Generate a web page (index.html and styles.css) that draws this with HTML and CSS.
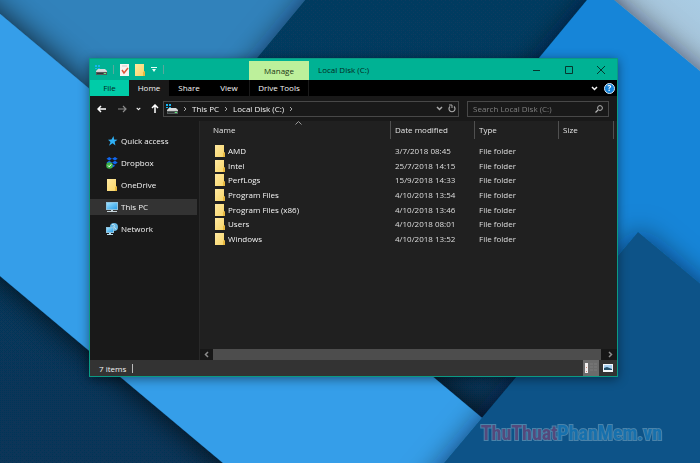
FILE: index.html
```html
<!DOCTYPE html>
<html lang="en">
<head>
<meta charset="utf-8">
<title>Local Disk (C:)</title>
<link rel="stylesheet" href="styles.css">
</head>
<body>
<svg class="defs" aria-hidden="true">
  <defs>
    <linearGradient id="fold" x1="0" y1="0" x2="1" y2="1"><stop offset="0" stop-color="#ffe9a2"/><stop offset="1" stop-color="#f8d568"/></linearGradient>
    <linearGradient id="screen" x1="0" y1="0" x2="1" y2="1"><stop offset="0" stop-color="#9be0ff"/><stop offset="1" stop-color="#2c9fe8"/></linearGradient>
  </defs>
  <symbol id="folder" viewBox="0 0 10 12"><path d="M0 0h9v12H0z" fill="url(#fold)"/><path d="M8 8l2-1v5H8z" fill="#e9b93f"/></symbol>
  <symbol id="drive" viewBox="0 0 12 10"><path d="M0 0h2v2H0zM3 0h2v2H3zM0 3h2v1H0zM3 3h2v1H3z" fill="#16b5f2"/><path d="M3 4h7l2 2H1z" fill="#d9dcdc"/><path d="M1 6h11v4H1z" fill="#555b5b"/><path d="M1 6h11v1H1z" fill="#d2d2d2"/><path d="M2 8h6v1H2z" fill="#303636"/><path d="M9 8h2v1H9z" fill="#5df07a"/></symbol>
  <symbol id="chev" viewBox="0 0 4 6"><path d="M1 1l2 2-2 2" fill="none" stroke="#a5a5a5"/></symbol>
  <symbol id="down" viewBox="0 0 7 5"><path d="M1 1l2.500 2.500L6 1" fill="none" stroke="currentColor" stroke-width="1.500"/></symbol>
</svg>

<svg class="wallpaper" viewBox="0 0 700 463" preserveAspectRatio="none" aria-hidden="true">
  <defs>
    <filter id="shade" x="-30%" y="-30%" width="160%" height="160%"><feDropShadow dx="0" dy="0" stdDeviation="16" flood-color="#000" flood-opacity=".8"/></filter>
    <filter id="soft" x="-30%" y="-30%" width="160%" height="160%"><feDropShadow dx="0" dy="0" stdDeviation="14" flood-color="#001020" flood-opacity=".6"/></filter>
    <linearGradient id="navy" x1="0" y1="0" x2="0" y2="1"><stop offset="0" stop-color="#063b61"/><stop offset="1" stop-color="#073456"/></linearGradient>
    <linearGradient id="gray" x1="1" y1="0" x2="0" y2="1"><stop offset="0" stop-color="#a9cce4"/><stop offset="1" stop-color="#a3b4c4"/></linearGradient>
  </defs>
  <path d="M0 0h420v270H0z" fill="#3182bb"/>
  <path d="M580 0h120v90H580z" fill="url(#gray)"/>
  <path d="M355-60L150 187H-80V560H640V100L598-13 570-60z" fill="url(#navy)" filter="url(#soft)"/>
  <path d="M598-13L587 0 539 58 440 177V340H800V154L614 0z" fill="#1585d8" filter="url(#soft)"/>
  <path d="M-80-53L0 14 481 417 580 500V600H386L223 463 0 276-80 209z" fill="#369ee9" filter="url(#shade)"/>
  <path d="M638 232L780 350V560H362L444 463z" fill="#0a5388" filter="url(#soft)"/>
</svg>

<main class="desktop">
  <section class="window" aria-label="File Explorer">
    <header class="titlebar">
      <div class="quick">
        <svg class="i-drive"><use href="#drive"/></svg>
        <span class="sep"></span>
        <button aria-label="Properties"><svg width="9" height="12" viewBox="0 0 9 12"><path d="M0 0h9v12H0z" fill="#f8f4f2"/><path d="M2 6l2 3 4-5" fill="none" stroke="#e0563a" stroke-width="1.500"/><path d="M2 2h5" stroke="#d4cdca"/></svg></button>
        <button aria-label="New folder"><svg class="i-folder"><use href="#folder"/></svg></button>
        <button class="custom" aria-label="Customize"><svg width="6" height="5" viewBox="0 0 6 5"><path d="M0 0h6v1H0zM1 2h4L3 5z" fill="#e8fff8"/></svg></button>
        <span class="sep"></span>
      </div>
      <div class="manage">Manage</div>
      <h1>Local Disk (C:)</h1>
      <div class="controls">
        <button aria-label="Minimize"><svg width="8" height="8" viewBox="0 0 8 8"><path d="M0 4.500h7" stroke="#06372e"/></svg></button>
        <button aria-label="Maximize"><svg width="8" height="8" viewBox="0 0 8 8"><path d="M.5.5h7v7h-7z" fill="none" stroke="#06372e"/></svg></button>
        <button aria-label="Close"><svg width="8" height="8" viewBox="0 0 8 8"><path d="M0 0l8 8M8 0L0 8" stroke="#06372e"/></svg></button>
      </div>
    </header>

    <nav class="ribbon">
      <button class="file">File</button>
      <button class="home">Home</button>
      <button>Share</button>
      <button>View</button>
      <button class="tools">Drive Tools</button>
      <span class="grow"></span>
      <button class="expand" aria-label="Expand the ribbon"><svg class="i-down"><use href="#down"/></svg></button>
      <button class="help" aria-label="Help">?</button>
    </nav>

    <div class="navrow">
      <div class="arrows">
        <button aria-label="Back"><svg width="10" height="8" viewBox="0 0 10 8"><path d="M9 4H1M4 1L1 4l3 3" fill="none" stroke="#fff" stroke-width="1.500"/></svg></button>
        <button aria-label="Forward"><svg width="10" height="8" viewBox="0 0 10 8"><path d="M1 4h8M6 1l3 3-3 3" fill="none" stroke="#8b8b8b" stroke-width="1.200"/></svg></button>
        <button aria-label="Recent locations"><svg width="5" height="4" viewBox="0 0 7 5"><use href="#down"/></svg></button>
        <button aria-label="Up"><svg width="8" height="9" viewBox="0 0 8 9"><path d="M4 9V1M1 4l3-3 3 3" fill="none" stroke="#fff" stroke-width="1.500"/></svg></button>
      </div>
      <div class="address">
        <svg class="i-drive"><use href="#drive"/></svg>
        <svg class="i-chev"><use href="#chev"/></svg>
        <a href="#">This PC</a>
        <svg class="i-chev"><use href="#chev"/></svg>
        <a href="#">Local Disk (C:)</a>
        <svg class="i-chev"><use href="#chev"/></svg>
        <span class="grow"></span>
        <button aria-label="Previous locations"><svg class="i-down"><use href="#down"/></svg></button>
        <button aria-label="Refresh"><svg width="8" height="9" viewBox="0 0 8 9"><path d="M2 2.500a3 3 0 1 0 4 0" fill="none" stroke="#aaa" stroke-width="1.200"/><path d="M1 1h3v3" fill="none" stroke="#aaa"/></svg></button>
      </div>
      <div class="search">
        <input type="text" aria-label="Search" placeholder="Search Local Disk (C:)">
        <button aria-label="Search"><svg width="8" height="8" viewBox="0 0 8 8"><circle cx="5" cy="3" r="2.400" fill="none" stroke="#b5b5b5"/><path d="M3 5L.5 7.500" stroke="#b5b5b5" stroke-width="1.300"/></svg></button>
      </div>
    </div>

    <div class="body">
      <nav class="sidebar">
        <a href="#"><svg width="12" height="12" viewBox="0 0 12 12"><path d="M7.500 1l.6 3.400 3.400.4-2.800 1.900.7 3.800-2.800-2.200L3 10.800l1.500-3.700L2 4.700l3.500-.3z" fill="#2fb0f5"/></svg>Quick access</a>
        <a href="#"><svg width="12" height="12" viewBox="0 0 12 12"><path d="M3.200 0L6 1.800 3.200 3.600.5 1.800zM9 0l2.700 1.800L9 3.600 6 1.800zM3.200 3.800L6 5.600 3.200 7.400.5 5.600zM9 3.800l2.700 1.800L9 7.400 6 5.600zM6.200 7l3 1.800-3 1.900z" fill="#1067f0"/><circle cx="3.500" cy="8.500" r="3.300" fill="#3fb548"/><path d="M2 8.500l1.200 1.300 2-2.400" fill="none" stroke="#fff"/></svg>Dropbox</a>
        <a href="#"><svg class="i-folder"><use href="#folder"/></svg>OneDrive</a>
        <a class="current" href="#"><svg width="12" height="12" viewBox="0 0 12 12"><path d="M0 1h12v8H0z" fill="#8fc4e0"/><path d="M1 2h10v6H1z" fill="url(#screen)"/><path d="M5 9h2v1h4v1H1v-1h4z" fill="#c5d3da"/></svg>This PC</a>
        <a href="#"><svg width="12" height="12" viewBox="0 0 12 12"><circle cx="8" cy="4" r="4" fill="#65b6e3"/><path d="M6 1.500c2-.5 3 .5 2 2s2 1 2 3" fill="none" stroke="#d0ebf5"/><path d="M0 4h8v6H0z" fill="#8fc4e0"/><path d="M1 5h6v4H1z" fill="url(#screen)"/><path d="M3 10h2v1h2v1H1v-1h2z" fill="#b9dcea"/></svg>Network</a>
      </nav>
      <div class="content">
        <table>
          <thead><tr>
            <th class="c-name">Name<svg class="sort" width="7" height="4" viewBox="0 0 7 4"><path d="M.5 3.500l3-3 3 3" fill="none" stroke="#999"/></svg></th>
            <th class="c-date">Date modified</th><th class="c-type">Type</th><th class="c-size">Size</th>
          </tr></thead>
          <tbody>
            <tr><td><span><svg class="i-folder"><use href="#folder"/></svg>AMD</span></td><td>3/7/2018 08:45</td><td>File folder</td><td></td></tr>
            <tr><td><span><svg class="i-folder"><use href="#folder"/></svg>Intel</span></td><td>25/7/2018 14:15</td><td>File folder</td><td></td></tr>
            <tr><td><span><svg class="i-folder"><use href="#folder"/></svg>PerfLogs</span></td><td>15/9/2018 14:33</td><td>File folder</td><td></td></tr>
            <tr><td><span><svg class="i-folder"><use href="#folder"/></svg>Program Files</span></td><td>4/10/2018 13:54</td><td>File folder</td><td></td></tr>
            <tr><td><span><svg class="i-folder"><use href="#folder"/></svg>Program Files (x86)</span></td><td>4/10/2018 13:46</td><td>File folder</td><td></td></tr>
            <tr><td><span><svg class="i-folder"><use href="#folder"/></svg>Users</span></td><td>4/10/2018 08:01</td><td>File folder</td><td></td></tr>
            <tr><td><span><svg class="i-folder"><use href="#folder"/></svg>Windows</span></td><td>4/10/2018 13:52</td><td>File folder</td><td></td></tr>
          </tbody>
        </table>
        <div class="scrollbar">
          <button aria-label="Scroll left"><svg width="5" height="7" viewBox="0 0 5 7"><path d="M4 1L1.500 3.500 4 6" fill="none" stroke="#8c8c8c" stroke-width="1.500"/></svg></button>
          <div class="thumb"></div>
          <button aria-label="Scroll right"><svg width="5" height="7" viewBox="0 0 5 7"><path d="M1 1l2.500 2.500L1 6" fill="none" stroke="#8c8c8c" stroke-width="1.500"/></svg></button>
        </div>
      </div>
    </div>

    <footer class="status">
      <span class="count">7 items</span>
      <span class="grow"></span>
      <button class="details" aria-label="Details view"><svg width="12" height="10" viewBox="0 0 12 10"><path d="M0 0h3v10H0z" fill="#f1eeee"/><path d="M1 4h1v1H1zM1 8h1v1H1z" fill="#d08a78"/><path d="M5 1h3M9 1h3M5 4h3M9 4h3M5 7h3M9 7h3" stroke="#7d7d7d"/></svg></button>
      <button class="thumbs" aria-label="Large icons view"><svg width="10" height="8" viewBox="0 0 10 8"><path d="M0 0h10v8H0z" fill="#f4f7fa"/><path d="M1 1h8v5H1z" fill="#a9d2f4"/><path d="M1 6V4l3-1 5 2v1z" fill="#24506b"/></svg></button>
    </footer>
  </section>
  <p class="brand"><span>ThuThuat</span>PhanMem.vn</p>
</main>
</body>
</html>
```
FILE: styles.css
```css
* { box-sizing: border-box; }
body { margin: 0; background: #073456; font: 8px/12px "Open Sans", "Noto Sans", sans-serif; color: #f4f4f4; }
button { margin: 0; padding: 0; border: 0; background: none; color: inherit; font: inherit; display: flex; align-items: center; justify-content: center; }
a { color: inherit; text-decoration: none; }
svg { display: block; flex: none; }
.defs { position: absolute; width: 0; height: 0; }
.wallpaper { position: fixed; inset: 0; width: 100%; height: 100%; }
.i-folder { width: 10px; height: 12px; }
.i-drive { width: 12px; height: 10px; }
.i-chev { width: 4px; height: 6px; }
.i-down { width: 7px; height: 5px; }
.grow { flex: 1; }

.desktop { position: relative; min-height: 100vh; padding: 58px 82px 86px 89px; display: flex; }
.window { flex: 1; min-width: 0; display: flex; flex-direction: column; background: #191919; border: 1px solid #0b9a83; box-shadow: 0 2px 10px rgba(0, 0, 0, .45); }

.titlebar { height: 21px; display: flex; align-items: center; background: #00b294; color: #042820; }
.quick { width: 159px; padding-left: 5px; display: flex; align-items: center; gap: 6px; }
.quick .sep { width: 1px; height: 9px; background: #5aa99c; }
.manage { align-self: flex-end; width: 60px; height: 19px; display: flex; align-items: center; justify-content: center; background: #bdf09b; color: #1c3414; }
.titlebar h1 { flex: 1; margin: 0; padding-left: 9px; font-size: 8px; font-weight: 400; }
.controls { display: flex; }
.controls button { width: 32px; height: 21px; }

.ribbon { height: 16px; display: flex; background: #000; }
.ribbon button { width: 40px; }
.ribbon .file { width: 39px; background: #00cca8; color: #042820; }
.ribbon .home { background: #191919; }
.ribbon .tools { width: 60px; border: solid #1a1a1a; border-width: 0 1px; }
.ribbon .expand { width: 16px; }
.ribbon .help { align-self: center; width: 11px; height: 11px; margin: 0 2px; border: 1px solid #d8e8f5; border-radius: 50%; background: #1683d9; color: #fff; font-weight: 700; }

.navrow { height: 25px; padding: 0 8px 0 7px; display: flex; align-items: center; }
.arrows { display: flex; align-items: center; justify-content: space-between; width: 62px; margin-right: 4px; }
.address, .search { height: 16px; display: flex; align-items: center; border: 1px solid #484848; }
.address { flex: 1; padding: 0 2px; gap: 5px; }
.address button { color: #aaa; }
.address a { white-space: nowrap; }
.search { flex: 0 0 142px; margin-left: 8px; padding: 0 5px; }
.search input { flex: 1; min-width: 0; padding: 0; border: 0; outline: 0; background: none; color: #f4f4f4; font: inherit; }
.search input::placeholder { color: #808080; opacity: 1; }

.body { flex: 1; display: flex; min-height: 0; }
.sidebar { width: 110px; padding: 12px 2px 0 0; display: flex; flex-direction: column; gap: 6px; border-right: 1px solid #282828; }
.sidebar a { height: 16px; padding-left: 16px; display: flex; align-items: center; gap: 3px; }
.sidebar .i-folder { margin: 0 1px; }
.sidebar .current { background: #333; }
.content { flex: 1; min-width: 0; display: flex; flex-direction: column; justify-content: space-between; background: #202020; }

table { width: 100%; border-collapse: separate; border-spacing: 0; table-layout: fixed; border-right: 3px solid #202020; }
th { position: relative; height: 18px; padding: 0 0 0 4px; text-align: left; font-weight: 400; color: #e2e2e2; border-right: 1px solid #505050; }
.c-name { width: 191px; }
.c-date, .c-type { width: 84px; }
th.c-name { padding-left: 13px; }
.sort { position: absolute; top: 0; left: 50%; }
td { height: 15px; padding: 0 0 0 4px; color: #dedede; white-space: nowrap; }
td:first-child { padding-left: 15px; color: #f4f4f4; }
td span { display: flex; align-items: center; gap: 3px; }
tr:nth-child(3n) td { height: 14px; }
tbody::before { content: ""; display: table-row; height: 4px; }

.scrollbar { height: 11px; display: flex; background: #171717; }
.scrollbar button { width: 13px; }
.thumb { flex: 1; margin-right: 3px; background: #4d4d4d; }

.status { height: 16px; padding-left: 9px; display: flex; align-items: center; background: #333; }
.count { padding-right: 6px; border-right: 1px solid #bbb; line-height: 9px; }
.details { width: 16px; height: 16px; background: #6b6b6b; }
.thumbs { width: 18px; }

.brand { position: absolute; right: 38px; bottom: 16px; margin: 0; font: 700 20px/28px "Roboto Condensed", Roboto, sans-serif; color: #1670ad; paint-order: stroke fill; -webkit-text-stroke: 2px #4b83a9; }
.brand span { color: #54497c; }
```
